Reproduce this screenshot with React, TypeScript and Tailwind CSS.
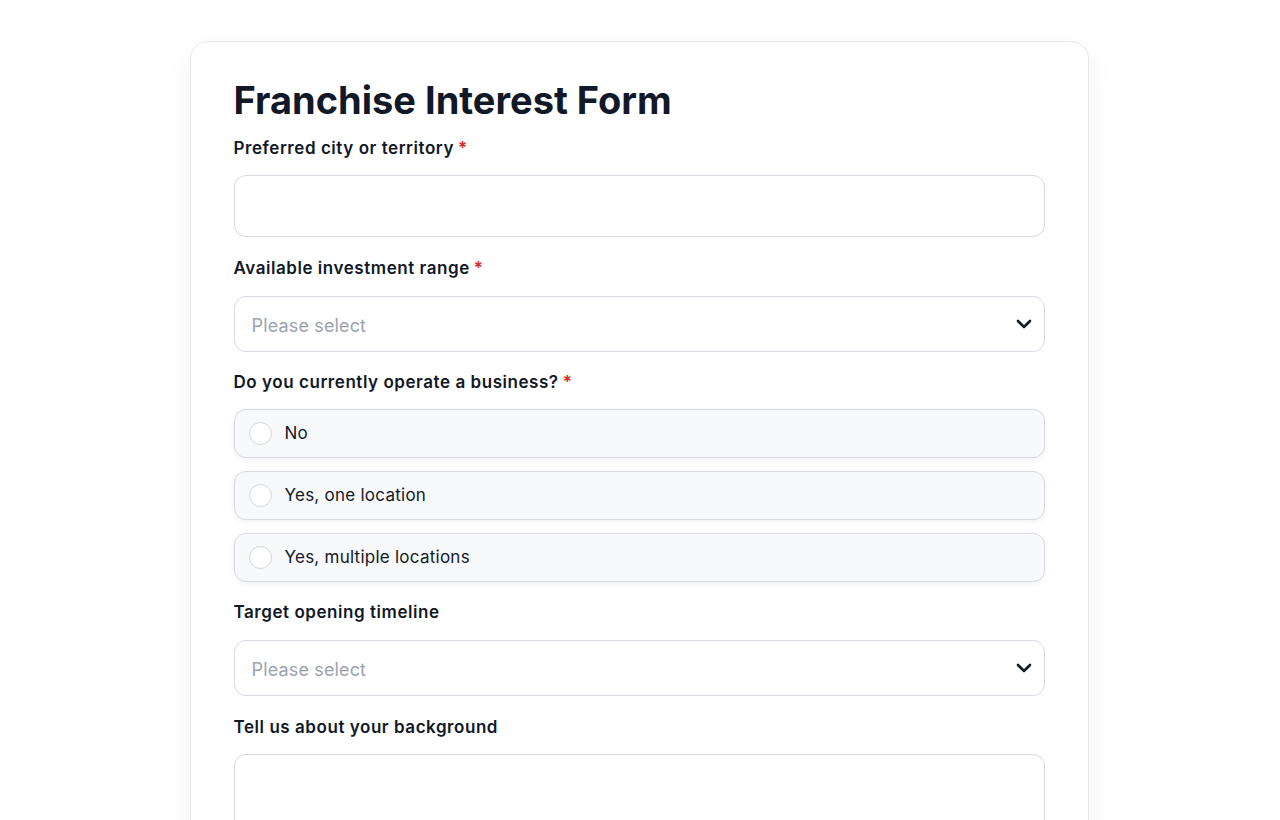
import { ChevronDown } from 'lucide-react'

const Label = ({ text, required }: { text: string; required?: boolean }) => (
  <label className="block text-[17px] font-semibold leading-[24px] tracking-[0.55px] text-[#111827]">
    {text}
    {required && <span className="ml-1 text-[#dc2626]">*</span>}
  </label>
)

const SelectBox = () => (
  <div className="flex h-[56px] items-center justify-between rounded-[12px] border border-[#d7d9e0] bg-white pl-[17px] pr-[8px]">
    <span className="pt-[2px] text-[18px] tracking-[0.15px] text-[#9ca3af]">Please select</span>
    <ChevronDown className="h-[24px] w-[24px] text-[#111827]" strokeWidth={2.6} />
  </div>
)

const RadioOption = ({ text }: { text: string }) => (
  <div className="flex h-[49px] items-center gap-[13px] rounded-[12px] border border-[#d7d9e0] bg-[#f8f9fb] px-[14px] shadow-[0_2px_6px_rgba(0,0,0,0.06)]">
    <span className="h-[23px] w-[23px] rounded-full border border-[#d1d5db] bg-white" />
    <span className="text-[17px] tracking-[0.25px] text-[#111827]">{text}</span>
  </div>
)

export default function App() {
  return (
    <div className="min-h-screen bg-white pt-[41px]" style={{ fontFamily: '"Inter", "Liberation Sans", sans-serif' }}>
      <div className="mx-auto w-[899px] -translate-x-[1px] rounded-[18px] border border-[#e5e7eb] bg-white px-[43px] pb-10 pt-[34px] shadow-[0_8px_30px_rgba(0,0,0,0.05)]">
        <h1 className="text-[38px] font-bold leading-[48px] text-[#111827]">Franchise Interest Form</h1>

        <div className="mt-[12px]">
          <Label text="Preferred city or territory" required />
          <div className="mt-[15px] h-[62px] rounded-[12px] border border-[#d7d9e0] bg-white" />
        </div>

        <div className="mt-[19px]">
          <Label text="Available investment range" required />
          <div className="mt-[16px]">
            <SelectBox />
          </div>
        </div>

        <div className="mt-[18px]">
          <Label text="Do you currently operate a business?" required />
          <div className="mt-[15px] flex flex-col gap-[13px]">
            <RadioOption text="No" />
            <RadioOption text="Yes, one location" />
            <RadioOption text="Yes, multiple locations" />
          </div>
        </div>

        <div className="mt-[18px]">
          <Label text="Target opening timeline" />
          <div className="mt-[16px]">
            <SelectBox />
          </div>
        </div>

        <div className="mt-[19px]">
          <Label text="Tell us about your background" />
          <div className="mt-[15px] h-[140px] rounded-[12px] border border-[#d7d9e0] bg-white" />
        </div>
      </div>
    </div>
  )
}
